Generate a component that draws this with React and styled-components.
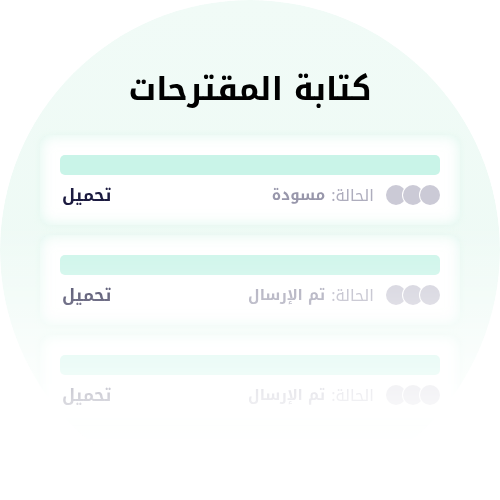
import React from "react";
import styled, { createGlobalStyle } from "styled-components";

const Global = createGlobalStyle`
  html, body { margin: 0; padding: 0; background: #ffffff; }
  body { font-family: "Noto Kufi Arabic", "Noto Sans Arabic", "DejaVu Sans", sans-serif; }
`;

const Stage = styled.div`
  width: 500px;
  height: 500px;
  overflow: hidden;
  background: #ffffff;
`;

const Disc = styled.div`
  width: 500px;
  height: 500px;
  border-radius: 50%;
  background: linear-gradient(180deg, #f1fbf7 0%, #eefaf5 60%, #f5fcf9 100%);
  box-sizing: border-box;
  padding-top: 68px;
  display: flex;
  flex-direction: column;
  align-items: center;
  direction: rtl;
  -webkit-mask-image: linear-gradient(180deg, #000 0px, #000 225px, rgba(0,0,0,0.66) 295px, rgba(0,0,0,0.22) 390px, transparent 450px);
  mask-image: linear-gradient(180deg, #000 0px, #000 225px, rgba(0,0,0,0.66) 295px, rgba(0,0,0,0.22) 390px, transparent 450px);
`;

const Title = styled.h1`
  margin: 0;
  height: 44px;
  line-height: 44px;
  font-size: 32px;
  font-weight: 700;
  color: #000000;
`;

const List = styled.div`
  margin-top: 23px;
  width: 420px;
  display: flex;
  flex-direction: column;
  gap: 10px;
`;

const Card = styled.div`
  box-sizing: border-box;
  height: 90px;
  padding: 20px 20px 0;
  border-radius: 10px;
  background: #ffffff;
  box-shadow: inset 0 0 14px rgba(196, 240, 224, 0.55), 0 0 6px rgba(214, 245, 233, 0.35);
  display: flex;
  flex-direction: column;
  gap: 10px;
`;

const Bar = styled.div`
  height: 20px;
  border-radius: 5px;
  background: #c9f4e8;
`;

const Row = styled.div`
  height: 20px;
  display: flex;
  align-items: center;
  justify-content: space-between;
`;

const Status = styled.div`
  display: flex;
  align-items: center;
  gap: 12px;
`;

const Avatars = styled.div`
  display: flex;
  align-items: center;
`;

const Dot = styled.span`
  width: 20px;
  height: 20px;
  border-radius: 50%;
  background: #cbcad6;
  box-shadow: 0 0 0 1px #ffffff;
  margin-inline-start: ${(p) => (p.$first ? "0" : "-3px")};
  position: relative;
  z-index: ${(p) => p.$z};
`;

const Label = styled.span`
  display: flex;
  align-items: center;
  gap: 6px;
  font-size: 16px;
  color: #aeadbd;
  white-space: nowrap;
`;

const Value = styled.b`
  font-size: 15px;
  font-weight: 700;
  color: #9897ab;
`;

const Download = styled.a`
  margin-left: 2px;
  font-size: 17px;
  font-weight: 700;
  color: #1c1b40;
  text-decoration: none;
`;

const items = ["مسودة", "تم الإرسال", "تم الإرسال"];

export default function App() {
  return (
    <Stage>
      <Global />
      <Disc>
        <Title>كتابة المقترحات</Title>
        <List>
          {items.map((s, i) => (
            <Card key={i}>
              <Bar />
              <Row>
                <Status>
                  <Avatars>
                    <Dot $first $z={3} />
                    <Dot $z={2} />
                    <Dot $z={1} />
                  </Avatars>
                  <Label>
                    <span>الحالة:</span>
                    <Value>{s}</Value>
                  </Label>
                </Status>
                <Download href="#">تحميل</Download>
              </Row>
            </Card>
          ))}
        </List>
      </Disc>
    </Stage>
  );
}
